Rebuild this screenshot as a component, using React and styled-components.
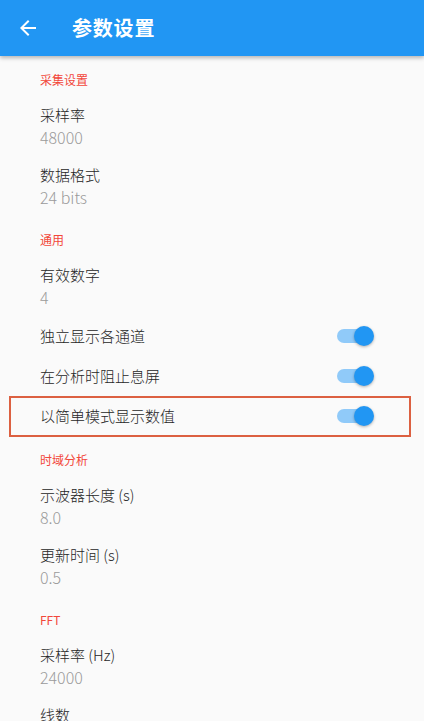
import React from "react";
import styled, { createGlobalStyle } from "styled-components";

const Global = createGlobalStyle`
  html, body { margin: 0; padding: 0; background: #fafafa; }
  body { font-family: "Noto Sans CJK SC", "Noto Sans", sans-serif; overflow: hidden; }
  * { box-sizing: border-box; }
`;

const Page = styled.div`
  width: 424px;
  min-height: 721px;
  background: #fafafa;
  display: flex;
  flex-direction: column;
`;

const AppBar = styled.header`
  height: 56px;
  background: #2196f3;
  display: flex;
  align-items: center;
  padding: 0 0 0 16px;
  box-shadow: 0 2px 4px rgba(0, 0, 0, 0.28);
  position: relative;
  z-index: 1;
  flex-shrink: 0;
`;

const BackButton = styled.button`
  width: 24px;
  height: 24px;
  padding: 0;
  border: 0;
  background: none;
  display: flex;
  align-items: center;
  justify-content: center;
  margin-right: 32px;
  margin-top: -1px;
  color: #fff;
`;

const Title = styled.h1`
  margin: 0;
  color: #fff;
  font-family: "Noto Sans CJK SC", sans-serif;
  font-size: 20px;
  font-weight: 700;
  letter-spacing: 0.8px;
  line-height: 1;
  margin-top: -1px;
`;

const List = styled.main`
  display: flex;
  flex-direction: column;
`;

const SectionHeader = styled.div`
  padding: 16px 40px 8px;
  height: 40px;
  line-height: 16px;
  font-size: 12px;
  color: #f2473a;
  font-family: "Noto Sans CJK SC", "Noto Sans", sans-serif;
  font-weight: 400;
`;

const Row = styled.div`
  position: relative;
  display: flex;
  align-items: center;
  justify-content: space-between;
  padding: ${(p) => (p.$twoLine ? "8px 50px 7px 40px" : "0 50px 0 40px")};
  height: ${(p) => (p.$twoLine ? "60px" : "40px")};
  ${(p) =>
    p.$highlight &&
    `
    &::after {
      content: "";
      position: absolute;
      left: 9px;
      right: 13px;
      top: 0;
      bottom: -1px;
      border: 2px solid #dc6041;
      pointer-events: none;
    }
  `}
`;

const Texts = styled.div`
  display: flex;
  flex-direction: column;
  align-self: ${(p) => (p.$twoLine ? "flex-start" : "center")};
`;

const ItemTitle = styled.div`
  font-size: 15px;
  line-height: 22px;
  color: #262626;
  font-weight: 300;
  font-family: "Noto Sans CJK SC", "Noto Sans", sans-serif;
`;

const ItemSub = styled.div`
  margin-top: 1px;
  font-size: 16px;
  line-height: 21px;
  color: #9a9a9a;
  font-weight: 300;
  font-family: "Noto Sans CJK SC", "Noto Sans", sans-serif;
`;

const SwitchBox = styled.div`
  position: relative;
  width: 37px;
  height: 20px;
  flex-shrink: 0;
`;

const Track = styled.div`
  position: absolute;
  left: 0;
  top: 3px;
  width: 34px;
  height: 14px;
  border-radius: 7px;
  background: ${(p) => (p.$on ? "#90caf9" : "#bdbdbd")};
`;

const Thumb = styled.div`
  position: absolute;
  top: 0;
  left: ${(p) => (p.$on ? "17px" : "0")};
  width: 20px;
  height: 20px;
  border-radius: 50%;
  background: ${(p) => (p.$on ? "#2196f3" : "#fafafa")};
  box-shadow: 0 1px 3px rgba(0, 0, 0, 0.3);
`;

function Switch({ on }) {
  return (
    <SwitchBox>
      <Track $on={on} />
      <Thumb $on={on} />
    </SwitchBox>
  );
}

const sections = [
  {
    header: "采集设置",
    items: [
      { title: "采样率", sub: "48000" },
      { title: "数据格式", sub: "24 bits" },
    ],
  },
  {
    header: "通用",
    items: [
      { title: "有效数字", sub: "4" },
      { title: "独立显示各通道", toggle: true },
      { title: "在分析时阻止息屏", toggle: true },
      { title: "以简单模式显示数值", toggle: true, highlight: true },
    ],
  },
  {
    header: "时域分析",
    items: [
      { title: "示波器长度 (s)", sub: "8.0" },
      { title: "更新时间 (s)", sub: "0.5" },
    ],
  },
  {
    header: "FFT",
    items: [
      { title: "采样率 (Hz)", sub: "24000" },
      { title: "线数", sub: "4096" },
    ],
  },
];

export default function App() {
  return (
    <Page>
      <Global />
      <AppBar>
        <BackButton aria-label="返回">
          <svg width="24" height="24" viewBox="0 0 24 24" fill="currentColor">
            <path d="M20 11H7.83l5.59-5.59L12 4l-8 8 8 8 1.41-1.41L7.83 13H20v-2z" />
          </svg>
        </BackButton>
        <Title>参数设置</Title>
      </AppBar>
      <List>
        {sections.map((s) => (
          <React.Fragment key={s.header}>
            <SectionHeader>{s.header}</SectionHeader>
            {s.items.map((it) => (
              <Row key={it.title} $twoLine={!!it.sub} $highlight={it.highlight}>
                <Texts $twoLine={!!it.sub}>
                  <ItemTitle>{it.title}</ItemTitle>
                  {it.sub && <ItemSub>{it.sub}</ItemSub>}
                </Texts>
                {it.toggle && <Switch on />}
              </Row>
            ))}
          </React.Fragment>
        ))}
      </List>
    </Page>
  );
}
